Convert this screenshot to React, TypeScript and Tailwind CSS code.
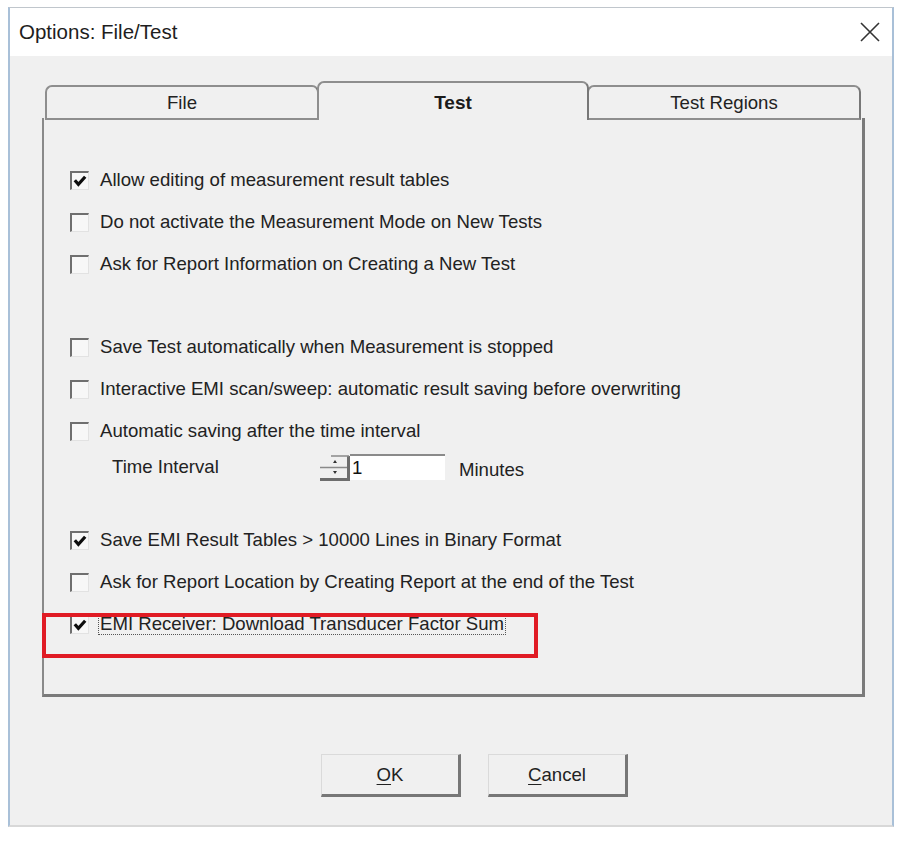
const font = { fontFamily: '"Liberation Sans", Arial, sans-serif' };

const Check = ({ checked }: { checked?: boolean }) => (
    <span className="w-[19px] h-[19px] bg-[#f7f7f7] border-t-2 border-l-2 border-[#6f6f6f] border-r border-b border-r-[#e2e2e2] border-b-[#e2e2e2] flex items-center justify-center shrink-0">
        {checked && (
            <svg width="14" height="12" viewBox="0 0 14 12">
                <path d="M1.8 5.2 L5.4 9.4 L12.2 1.8" stroke="#0d0d0d" strokeWidth="3.2" fill="none" />
            </svg>
        )}
    </span>
);

const Row = ({ label, checked }: { label: string; checked?: boolean }) => (
    <div className="h-[42px] flex items-center gap-[11px]">
        <Check checked={checked} />
        <span className="text-[18.6px] text-[#222] leading-none whitespace-nowrap">{label}</span>
    </div>
);

const Tab = ({ label, active }: { label: string; active?: boolean }) =>
    active ? (
        <div className="w-[272px] h-[39px] -mx-[2px] relative z-10 bg-[#f0f0f0] border-2 border-b-0 border-[#8e8e8e] border-r-[#777] rounded-t-[7px] flex items-center justify-center pt-[4px]">
            <span className="text-[19px] font-bold text-[#1b1b1b]">{label}</span>
        </div>
    ) : (
        <div className="w-[274px] h-[35px] bg-[#f0f0f0] border-2 border-[#8e8e8e] border-r-[#777] rounded-t-[7px] flex items-center justify-center">
            <span className="text-[18.6px] text-[#222]">{label}</span>
        </div>
    );

const Button = ({ first, rest }: { first: string; rest: string }) => (
    <button className="w-[140px] h-[43px] bg-[#f0f0f0] border border-[#dadada] border-r-[3px] border-b-[3px] border-r-[#777] border-b-[#777] flex items-center justify-center text-[18.6px] text-[#222]">
        <span className="underline underline-offset-[3px]">{first}</span>
        {rest}
    </button>
);

const App = () => {
    return (
        <div className="w-[900px] h-[842px] bg-white pt-[7px] pl-[8px]" style={font}>
            <div className="w-[886px] border-t border-l-2 border-r-2 border-[#a9c0d8] border-t-[#c0c6cc] border-b-2 border-b-[#d8d8d8]">
                {/* title bar */}
                <div className="h-[48px] bg-white flex items-center justify-between pl-[9px] pr-[12px]">
                    <span className="text-[20.5px] text-[#1e1e1e]">Options: File/Test</span>
                    <svg width="20" height="20" viewBox="0 0 20 20">
                        <path d="M1 1 L19 19 M19 1 L1 19" stroke="#333" strokeWidth="1.6" />
                    </svg>
                </div>
                {/* body */}
                <div className="bg-[#f0f0f0] pt-[25px] pb-[28px] pl-[32px]">
                    <div className="flex items-end pl-[3px] w-[822px]">
                        <Tab label="File" />
                        <Tab label="Test" active />
                        <Tab label="Test Regions" />
                    </div>
                    <div className="relative -mt-[2px] w-[823px] h-[579px] border-l-2 border-[#8a8a8a] border-r-[3px] border-b-[3px] border-r-[#7a7a7a] border-b-[#7a7a7a] pl-[26px] pt-[41px]">
                        <Row label="Allow editing of measurement result tables" checked />
                        <Row label="Do not activate the Measurement Mode on New Tests" />
                        <Row label="Ask for Report Information on Creating a New Test" />
                        <div className="h-[41px]" />
                        <Row label="Save Test automatically when Measurement is stopped" />
                        <Row label="Interactive EMI scan/sweep: automatic result saving before overwriting" />
                        <Row label="Automatic saving after the time interval" />
                        <div className="h-[30px] flex items-center pl-[42px]">
                            <span className="w-[208px] text-[18.6px] text-[#222]">Time Interval</span>
                            <svg width="30" height="27" viewBox="0 0 30 27" className="shrink-0">
                                <rect x="0" y="0" width="30" height="27" fill="#f0f0f0" />
                                <path d="M0 13.5 H27" stroke="#8a8a8a" strokeWidth="1.5" />
                                <path d="M0 25.5 H30" stroke="#6d6d6d" strokeWidth="3" />
                                <path d="M28.5 2 V27" stroke="#6d6d6d" strokeWidth="3" />
                                <path d="M11 2 H29" stroke="#8a8a8a" strokeWidth="1.5" />
                                <path d="M13 9 L15 6 L17 9 Z" fill="#333" />
                                <path d="M13 17 L15 20 L17 17 Z" fill="#333" />
                            </svg>
                            <div className="w-[95px] h-[26px] bg-white border-t-2 border-[#8a8a8a] flex items-center pl-[2px] text-[18.6px] text-[#111]">1</div>
                            <span className="ml-[14px] mt-[6px] text-[18.6px] text-[#222]">Minutes</span>
                        </div>
                        <div className="h-[37px]" />
                        <Row label="Save EMI Result Tables > 10000 Lines in Binary Format" checked />
                        <Row label="Ask for Report Location by Creating Report at the end of the Test" />
                        <div className="h-[42px] flex items-center gap-[9px]">
                            <Check checked />
                            <span className="text-[18.6px] text-[#222] leading-none whitespace-nowrap border border-dotted border-[#555] px-[1px] py-[1px]">EMI Receiver: Download Transducer Factor Sum</span>
                        </div>
                        <div className="absolute left-[-2px] top-[495px] w-[496px] h-[45px] border-[4px] border-[#e01b24]" />
                    </div>
                    <div className="flex gap-[27px] pl-[279px] pt-[57px]">
                        <Button first="O" rest="K" />
                        <Button first="C" rest="ancel" />
                    </div>
                </div>
            </div>
        </div>
    );
};

export default App;
